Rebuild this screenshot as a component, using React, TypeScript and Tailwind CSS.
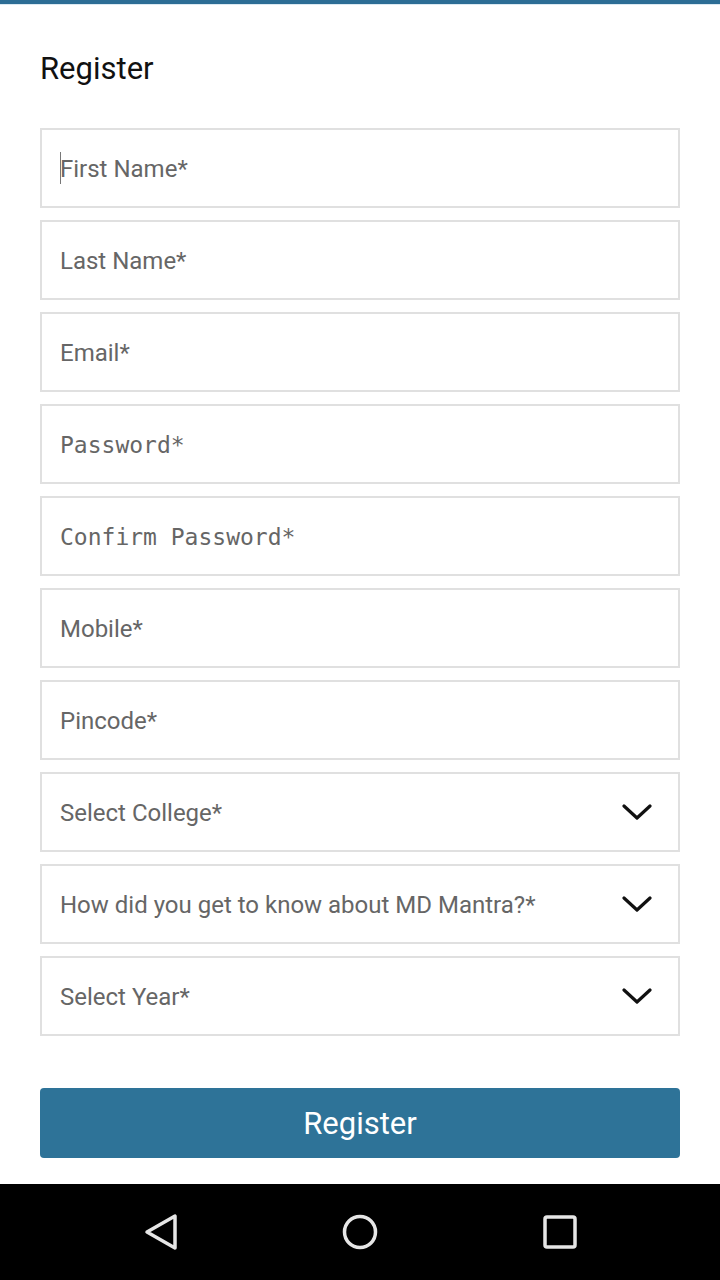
import React from "react";

type Field = { label: string; mono?: boolean; select?: boolean; focused?: boolean };

const fields: Field[] = [
    { label: "First Name*", focused: true },
    { label: "Last Name*" },
    { label: "Email*" },
    { label: "Password*", mono: true },
    { label: "Confirm Password*", mono: true },
    { label: "Mobile*" },
    { label: "Pincode*" },
    { label: "Select College*", select: true },
    { label: "How did you get to know about MD Mantra?*", select: true },
    { label: "Select Year*", select: true },
];

function Chevron() {
    return (
        <svg width="30" height="18" viewBox="0 0 30 18" className="shrink-0">
            <polyline
                points="2,3 15,15 28,3"
                fill="none"
                stroke="#111"
                strokeWidth="3.2"
                strokeLinecap="round"
                strokeLinejoin="round"
            />
        </svg>
    );
}

export default function App() {
    return (
        <div className="flex h-[1280px] w-[720px] flex-col bg-white font-['Roboto',sans-serif]">
            <div className="h-[4px] bg-[#2c6d95]" />
            <div className="h-[1px] bg-[#dbe9f2]" />

            <div className="flex flex-1 flex-col px-10">
                <h1 className="mt-[44px] h-[39px] text-[31px] leading-[40px] text-[#111]">
                    Register
                </h1>

                {/* Form fields */}
                <div className="mt-[40px] flex flex-col gap-3">
                    {fields.map((f) => (
                        <div
                            key={f.label}
                            className="flex h-[80px] items-center border-2 border-[#e0e0e0] pl-[18px] pr-[26px]"
                        >
                            {f.focused && (
                                <span className="mr-[-1px] h-[32px] w-[1px] bg-[#777]" />
                            )}
                            <span
                                className={`flex-1 pt-[2px] text-[#666] ${
                                    f.mono
                                        ? "font-['DejaVu_Sans_Mono',monospace] text-[23px]"
                                        : "text-[24px]"
                                }`}
                            >
                                {f.label}
                            </span>
                            {f.select && <Chevron />}
                        </div>
                    ))}
                </div>

                <button className="mt-[52px] h-[70px] w-full rounded-[4px] bg-[#2e7398] pt-[3px] text-[31px] text-white">
                    Register
                </button>
            </div>

            {/* Android nav bar */}
            <div className="flex h-[96px] items-center justify-center gap-[160px] bg-black">
                <svg width="40" height="40" viewBox="0 0 40 40">
                    <path
                        d="M35 4 L35 36 L7 20 Z"
                        fill="none"
                        stroke="#e6e6e6"
                        strokeWidth="3.5"
                        strokeLinejoin="round"
                    />
                </svg>
                <svg width="40" height="40" viewBox="0 0 40 40">
                    <circle cx="20" cy="20" r="15.5" fill="none" stroke="#e6e6e6" strokeWidth="3.5" />
                </svg>
                <svg width="40" height="40" viewBox="0 0 40 40">
                    <rect x="5" y="5" width="30" height="30" rx="2" fill="none" stroke="#e6e6e6" strokeWidth="3.5" />
                </svg>
            </div>
        </div>
    );
}
